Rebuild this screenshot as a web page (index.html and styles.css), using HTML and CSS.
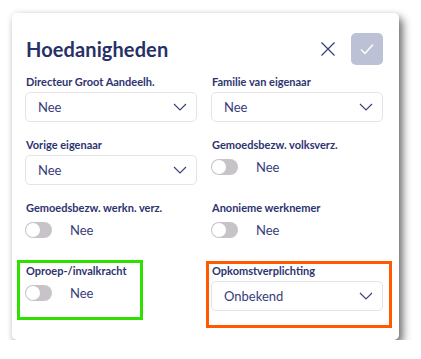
FILE: index.html
```html
<!DOCTYPE html>
<html lang="nl">
<head>
  <meta charset="UTF-8">
  <title>Hoedanigheden</title>
  <meta name="viewport" content="width=device-width, initial-scale=1.0">
  <link rel="stylesheet" href="styles.css">
</head>
<body>
  <div class="card">
    <div class="card-head">
      <h2>Hoedanigheden</h2>
      <div class="head-actions">
        <button class="icon-btn" type="button" aria-label="Sluiten">
          <svg width="16" height="16" viewBox="0 0 16 16"><path d="M1.5 1.5 L14.5 14.5 M14.5 1.5 L1.5 14.5" stroke="#3a4078" stroke-width="1.3" fill="none"/></svg>
        </button>
        <button class="save-btn" type="button" aria-label="Opslaan">
          <svg width="16" height="16" viewBox="0 0 16 16"><path d="M2 8.5 L6 12.5 L14 3.5" stroke="#fff" stroke-width="1.5" fill="none"/></svg>
        </button>
      </div>
    </div>

    <div class="fields">
      <div class="field">
        <label>Directeur Groot Aandeelh.</label>
        <div class="select"><span>Nee</span><svg width="14" height="8" viewBox="0 0 14 8"><path d="M1 1 L7 7 L13 1" stroke="#3d4380" stroke-width="1.2" fill="none"/></svg></div>
      </div>
      <div class="field">
        <label>Familie van eigenaar</label>
        <div class="select"><span>Nee</span><svg width="14" height="8" viewBox="0 0 14 8"><path d="M1 1 L7 7 L13 1" stroke="#3d4380" stroke-width="1.2" fill="none"/></svg></div>
      </div>

      <div class="field">
        <label>Vorige eigenaar</label>
        <div class="select"><span>Nee</span><svg width="14" height="8" viewBox="0 0 14 8"><path d="M1 1 L7 7 L13 1" stroke="#3d4380" stroke-width="1.2" fill="none"/></svg></div>
      </div>
      <div class="field">
        <label>Gemoedsbezw. volksverz.</label>
        <div class="toggle-row"><span class="toggle"></span><span>Nee</span></div>
      </div>

      <div class="field">
        <label>Gemoedsbezw. werkn. verz.</label>
        <div class="toggle-row"><span class="toggle"></span><span>Nee</span></div>
      </div>
      <div class="field">
        <label>Anonieme werknemer</label>
        <div class="toggle-row"><span class="toggle"></span><span>Nee</span></div>
      </div>

      <div class="field mark-green">
        <label>Oproep-/invalkracht</label>
        <div class="toggle-row"><span class="toggle"></span><span>Nee</span></div>
      </div>
      <div class="field mark-orange">
        <label>Opkomstverplichting</label>
        <div class="select"><span>Onbekend</span><svg width="14" height="8" viewBox="0 0 14 8"><path d="M1 1 L7 7 L13 1" stroke="#3d4380" stroke-width="1.2" fill="none"/></svg></div>
      </div>
    </div>
  </div>
</body>
</html>
```

FILE: styles.css
```css
body {
  margin: 0;
  padding: 13px 0 0 12px;
  background: #fff;
  font-family: Lato, 'Open Sans', Arial, sans-serif;
}
.card {
  width: 387px;
  height: 327px;
  box-sizing: border-box;
  background: #fff;
  border-radius: 5px;
  padding: 20px 16px 0 13px;
  box-shadow: 4px 5px 8px rgba(0,0,0,0.55), 0 0 6px rgba(0,0,0,0.08);
}
.card-head {
  display: flex;
  align-items: center;
  justify-content: space-between;
  height: 32px;
  padding-left: 1px;
}
.card-head h2 {
  margin: 0;
  font-size: 20px;
  font-weight: 700;
  color: #283068;
  letter-spacing: 0.1px;
}
.head-actions {
  display: flex;
  align-items: center;
  gap: 15px;
}
.icon-btn {
  background: none;
  border: none;
  padding: 0;
  width: 16px;
  height: 16px;
  display: flex;
}
.save-btn {
  width: 32px;
  height: 32px;
  border: none;
  border-radius: 5px;
  background: #bdc1d5;
  display: flex;
  align-items: center;
  justify-content: center;
  padding: 0;
}
.fields {
  display: grid;
  grid-template-columns: 172px 172px;
  column-gap: 14px;
  row-gap: 16px;
  margin-top: 10px;
}
.field {
  display: flex;
  flex-direction: column;
  position: relative;
}
.field label {
  font-size: 11px;
  font-weight: 700;
  color: #2d3470;
  line-height: 14px;
  height: 14px;
  margin: 0 0 3px 1px;
  white-space: nowrap;
}
.select {
  height: 30px;
  box-sizing: border-box;
  border: 1px solid #e3e3e9;
  border-radius: 5px;
  display: flex;
  align-items: center;
  justify-content: space-between;
  padding: 0 9px 0 12px;
  font-size: 13px;
  color: #363d7a;
}
.toggle-row {
  height: 30px;
  display: flex;
  align-items: center;
  gap: 18px;
  font-size: 13px;
  color: #363d7a;
  margin: -3px 0 3px 0;
}
.toggle {
  width: 27px;
  height: 16px;
  border-radius: 8px;
  background: #c8c3c8;
  position: relative;
  flex: none;
}
.toggle::after {
  content: '';
  position: absolute;
  left: 1px;
  top: 1px;
  width: 14px;
  height: 14px;
  border-radius: 50%;
  background: #fff;
}
.mark-green::after,
.mark-orange::after {
  content: '';
  position: absolute;
  box-sizing: border-box;
  pointer-events: none;
}
.mark-green::after {
  left: -8px;
  top: -4px;
  width: 126px;
  height: 60px;
  border: 3px solid #2fe000;
}
.mark-orange::after {
  left: -5px;
  top: -3px;
  width: 186px;
  height: 67px;
  border: 3px solid #ff5a00;
}
```
